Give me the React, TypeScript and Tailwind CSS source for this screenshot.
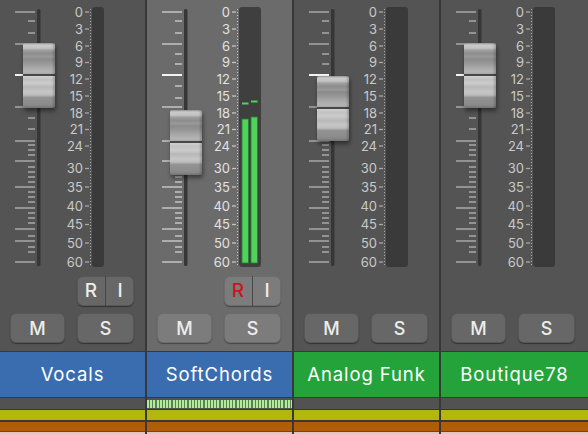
import React from "react";

type Tick = [number, "L" | "S" | "U"];
const TICKS: Tick[] = [
  [12, "L"], [21, "S"], [33, "S"], [44, "L"], [54, "S"], [64, "S"], [75, "U"],
  [86, "S"], [98, "S"], [107, "L"], [118, "S"], [129, "S"], [141, "L"], [145, "S"],
  [150, "S"], [155, "S"], [161, "L"], [167, "S"], [172, "S"], [177, "S"], [182, "S"],
  [187, "L"], [192, "S"], [197, "S"], [202, "S"], [208, "L"], [213, "S"], [218, "S"],
  [223, "S"], [229, "L"], [236, "S"], [241, "L"], [247, "S"], [252, "S"], [262, "L"],
];

const LABELS: [string, number][] = [
  ["0", 12], ["3", 29], ["6", 46], ["9", 62.5], ["12", 79], ["15", 96], ["18", 113],
  ["21", 129.5], ["24", 146], ["30", 168.5], ["35", 187], ["40", 206], ["45", 224.5],
  ["50", 243], ["60", 262],
];

type Ch = {
  name: string;
  selected: boolean;
  stereo: boolean;
  ri: boolean;
  faderTop: string;
  nameBg: string;
  levels?: boolean;
  last?: boolean;
};

const CHANNELS: Ch[] = [
  { name: "Vocals", selected: false, stereo: false, ri: true, faderTop: "top-[43px]", nameBg: "bg-[#3a6daf]" },
  { name: "SoftChords", selected: true, stereo: true, ri: true, faderTop: "top-[110px]", nameBg: "bg-[#3a6daf]", levels: true },
  { name: "Analog Funk", selected: false, stereo: true, ri: false, faderTop: "top-[76px]", nameBg: "bg-[#23a33a]" },
  { name: "Boutique78", selected: false, stereo: true, ri: false, faderTop: "top-[43px]", nameBg: "bg-[#23a33a]", last: true },
];

function Scale({ ch }: { ch: Ch }) {
  const labelColor = ch.selected ? "#e2e2e2" : "#c9c9c9";
  const tickColor = ch.selected ? "#c4c4c4" : "#a9a9a9";
  const meterW = ch.stereo ? 22 : 12;
  return (
    <svg width={145} height={272} className="block">
      {TICKS.map(([y, t], i) => (
        <line
          key={i}
          x1={t === "S" ? 28 : 15}
          x2={35}
          y1={y}
          y2={y}
          stroke={t === "U" ? "#f2f2f2" : tickColor}
          strokeWidth={t === "U" ? 2 : 1.5}
        />
      ))}
      <rect x={37} y={9} width={3.5} height={257} rx={1.5} fill="#363636" />
      {LABELS.map(([l, y]) => (
        <g key={l}>
          <text
            x={83}
            y={y + 4.5}
            textAnchor="end"
            fontSize={13}
            fill={labelColor}
            fontFamily="Inter, 'Liberation Sans', sans-serif"
          >
            {l}
          </text>
          <line x1={85} x2={89} y1={y} y2={y} stroke={tickColor} strokeWidth={1.3} />
        </g>
      ))}
      <line x1={90.5} x2={90.5} y1={9} y2={265} stroke={tickColor} strokeWidth={1} strokeDasharray="1 2" />
      <rect x={92} y={7} width={meterW} height={260} rx={3} fill={ch.selected ? "#3f3f3f" : "#3a3a3a"} />
      {ch.levels && (
        <g>
          <rect x={95} y={119} width={6.5} height={144} fill="#4fd35a" stroke="#2b7d34" strokeWidth={0.8} />
          <rect x={104} y={117} width={6.5} height={146} fill="#4fd35a" stroke="#2b7d34" strokeWidth={0.8} />
          <rect x={95} y={102.5} width={6.5} height={2} fill="#4fd35a" />
          <rect x={104} y={100.5} width={6.5} height={2} fill="#4fd35a" />
        </g>
      )}
    </svg>
  );
}

function Channel({ ch }: { ch: Ch }) {
  const btn = ch.selected
    ? "bg-[#7c7c7c] shadow-[0_1px_1px_rgba(0,0,0,0.35),inset_0_0_0_1px_rgba(0,0,0,0.12)]"
    : "bg-[#676767] shadow-[0_1px_1px_rgba(0,0,0,0.4),inset_0_0_0_1px_rgba(0,0,0,0.15)]";
  return (
    <div className={`flex flex-col w-[147px] shrink-0 bg-[#383838] ${ch.last ? "" : "border-r-2 border-[#383838]"}`}>
      <div className={`relative h-[352px] ${ch.selected ? "bg-[#6b6b6b]" : "bg-[#545454]"}`}>
        <Scale ch={ch} />
        <div
          className={`absolute left-[23px] ${ch.faderTop} w-[32px] h-[65px] rounded-[2px] bg-[linear-gradient(180deg,#9a9a9a_0%,#cacaca_3%,#c2c2c2_8%,#a0a0a0_11%,#8d8d8d_16%,#999999_21%,#8b8b8b_25%,#979797_31%,#a6a6a6_37%,#b4b4b4_44%,#a9a9a9_47.5%,#474747_48%,#474747_50%,#d0d0d0_50.5%,#c2c2c2_56%,#cbcbcb_62%,#b8b8b8_68%,#c6c6c6_75%,#bdbdbd_80%,#929292_84%,#8c8c8c_94%,#7a7a7a_100%)] shadow-[inset_-2px_0_2px_rgba(0,0,0,0.18),1px_3px_4px_rgba(0,0,0,0.45)]`}
        />
        <div className="flex flex-col mt-[4px] font-['Inter','Liberation_Sans',sans-serif] font-medium text-[#ededed]">
          <div className="h-[30px]">
            {ch.ri && (
              <div className={`ml-[77px] w-[57px] h-[30px] flex rounded-[6px] overflow-hidden ${btn}`}>
                <div className={`flex-1 flex items-center justify-center text-[19px] border-r border-[#474747] ${ch.selected ? "text-[#c8161b]" : ""}`}>
                  R
                </div>
                <div className="flex-1 flex items-center justify-center text-[19px]">I</div>
              </div>
            )}
          </div>
          <div className="flex mt-[7px] h-[30px]">
            <div className={`ml-[10px] w-[55px] rounded-[6px] flex items-center justify-center text-[18px] ${btn}`}>M</div>
            <div className={`ml-[12px] w-[57px] rounded-[6px] flex items-center justify-center text-[18px] ${btn}`}>S</div>
          </div>
        </div>
      </div>
      <div className="h-[1px] bg-[#383838]" />
      <div className={`h-[45px] flex items-center justify-center text-white text-[18.5px] tracking-[0.9px] font-['Inter','Liberation_Sans',sans-serif] ${ch.nameBg}`}>
        {ch.name}
      </div>
      <div className="h-[1px] bg-[#383838]" />
      <div className="h-[11px] bg-[#525252] flex items-center">
        {ch.levels && (
          <div className="w-full h-[8px] bg-[repeating-linear-gradient(90deg,#b2ec9a_0px,#b2ec9a_2px,#5d7d52_2px,#5d7d52_3.2px)]" />
        )}
      </div>
      <div className="h-[1px] bg-[#383838]" />
      <div className="h-[10px] bg-[#b1b70b]" />
      <div className="h-[2px] bg-[#383838]" />
      <div className="h-[9px] bg-[#b25c05]" />
      <div className="h-[1px] bg-[#5a4a40]" />
      <div className="h-[2px] bg-[#dcc8c0]" />
    </div>
  );
}

export default function App() {
  return (
    <div className="flex w-[588px] h-[434px] overflow-hidden bg-[#383838]">
      {CHANNELS.map((c) => (
        <Channel key={c.name} ch={c} />
      ))}
    </div>
  );
}
